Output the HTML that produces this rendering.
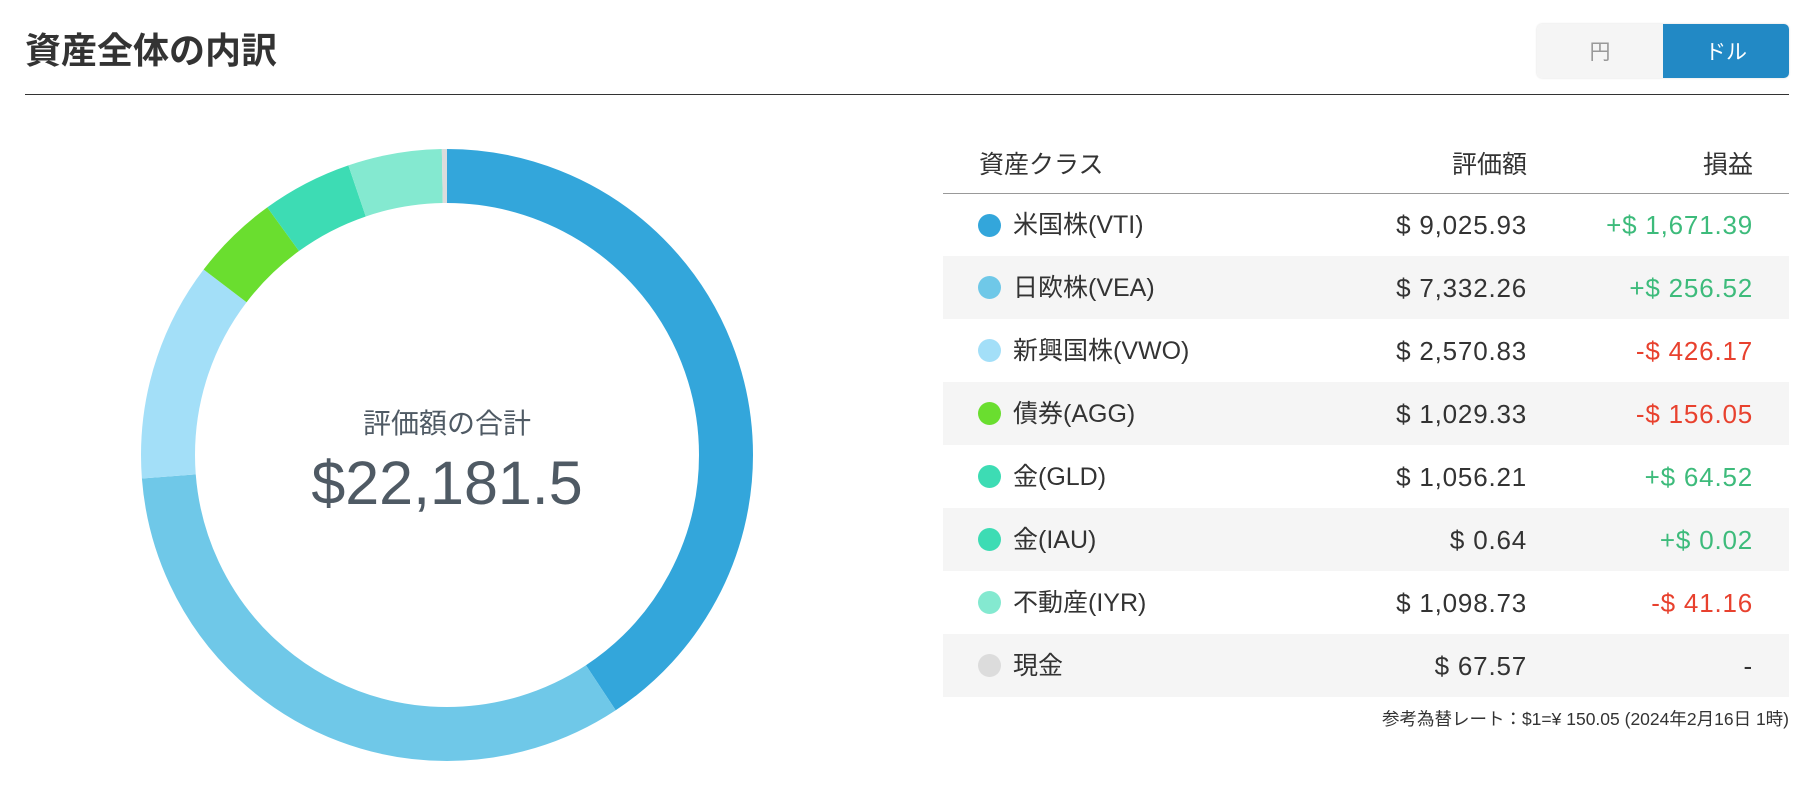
<!DOCTYPE html>
<html><head><meta charset="utf-8"><style>
*{margin:0;padding:0;box-sizing:border-box}
body{width:1808px;height:810px;background:#fff;font-family:"Liberation Sans","Noto Sans CJK JP",sans-serif;position:relative;overflow:hidden;color:#333}
h1{position:absolute;left:25px;top:26px;font-size:36px;font-weight:bold;color:#333;line-height:50px}
.tog{position:absolute;left:1537px;top:24px;width:252px;height:54px;border-radius:5px;overflow:hidden;display:flex;box-shadow:0 0 2px rgba(0,0,0,.15)}
.tog div{flex:1;display:flex;align-items:center;justify-content:center;font-size:21px}
.tog .a{background:#f5f5f5;color:#999}
.tog .b{background:#2289c5;color:#fff}
.hr{position:absolute;left:25px;top:94px;width:1764px;height:1px;background:#333}
.ctr{position:absolute;left:197px;width:500px;text-align:center;color:#4f5a64}
table{position:absolute;left:943px;top:140px;width:846px;border-collapse:collapse;font-size:26px;color:#333;table-layout:fixed}
th{font-weight:normal;height:53px;text-align:right;border-bottom:1px solid #999;padding-bottom:2px;font-size:25px;vertical-align:middle;line-height:30px}
td{height:63px;text-align:right;vertical-align:middle;line-height:30px;letter-spacing:0.8px}
tr:nth-child(odd) td{background:#f5f5f5}
.n{text-align:left;padding-left:70px;position:relative;font-size:25px;letter-spacing:0}
.d{position:absolute;left:35px;top:20px;width:23px;height:23px;border-radius:50%}
.g{color:#3dbb7b}.r{color:#e8412e}
.foot{position:absolute;right:19px;top:706px;font-size:17.5px;color:#333}
</style></head><body>
<h1>資産全体の内訳</h1>
<div class="tog"><div class="a">円</div><div class="b">ドル</div></div>
<div class="hr"></div>
<svg style="position:absolute;left:0;top:0" width="900" height="810">
<g transform="rotate(-90 447 455)" fill="none" stroke-width="54">
<circle cx="447" cy="455" r="279" stroke="#33a6db" stroke-dasharray="713.5 2000" stroke-dashoffset="0"/>
<circle cx="447" cy="455" r="279" stroke="#6fc8e8" stroke-dasharray="579.6 2000" stroke-dashoffset="-713.5"/>
<circle cx="447" cy="455" r="279" stroke="#a3dff8" stroke-dasharray="203.2 2000" stroke-dashoffset="-1293.1"/>
<circle cx="447" cy="455" r="279" stroke="#6ade2f" stroke-dasharray="81.4 2000" stroke-dashoffset="-1496.3"/>
<circle cx="447" cy="455" r="279" stroke="#3ddcb4" stroke-dasharray="83.6 2000" stroke-dashoffset="-1577.7"/>
<circle cx="447" cy="455" r="279" stroke="#84e9d0" stroke-dasharray="86.8 2000" stroke-dashoffset="-1661.3"/>
<circle cx="447" cy="455" r="279" stroke="#dcdcdc" stroke-dasharray="5.3 2000" stroke-dashoffset="-1748.1"/>
</g></svg>
<div class="ctr" style="top:402px;font-size:28px">評価額の合計</div>
<div class="ctr" style="top:448px;font-size:61px">$22,181.5</div>
<table>
<colgroup><col style="width:360px"><col style="width:224px"><col style="width:262px"></colgroup>
<tr><th class="n" style="text-align:left;padding-left:36px">資産クラス</th><th>評価額</th><th style="padding-right:36px">損益</th></tr>
<tr><td class="n"><span class="d" style="background:#33a6db"></span>米国株(VTI)</td><td>$ 9,025.93</td><td class="g" style="padding-right:36px">+$ 1,671.39</td></tr>
<tr><td class="n"><span class="d" style="background:#6fc8e8"></span>日欧株(VEA)</td><td>$ 7,332.26</td><td class="g" style="padding-right:36px">+$ 256.52</td></tr>
<tr><td class="n"><span class="d" style="background:#a3dff8"></span>新興国株(VWO)</td><td>$ 2,570.83</td><td class="r" style="padding-right:36px">-$ 426.17</td></tr>
<tr><td class="n"><span class="d" style="background:#6ade2f"></span>債券(AGG)</td><td>$ 1,029.33</td><td class="r" style="padding-right:36px">-$ 156.05</td></tr>
<tr><td class="n"><span class="d" style="background:#3ddcb4"></span>金(GLD)</td><td>$ 1,056.21</td><td class="g" style="padding-right:36px">+$ 64.52</td></tr>
<tr><td class="n"><span class="d" style="background:#3ddcb4"></span>金(IAU)</td><td>$ 0.64</td><td class="g" style="padding-right:36px">+$ 0.02</td></tr>
<tr><td class="n"><span class="d" style="background:#84e9d0"></span>不動産(IYR)</td><td>$ 1,098.73</td><td class="r" style="padding-right:36px">-$ 41.16</td></tr>
<tr><td class="n"><span class="d" style="background:#dcdcdc"></span>現金</td><td>$ 67.57</td><td style="padding-right:36px">-</td></tr>
</table>
<div class="foot">参考為替レート：$1=¥ 150.05 (2024年2月16日 1時)</div>
</body></html>
